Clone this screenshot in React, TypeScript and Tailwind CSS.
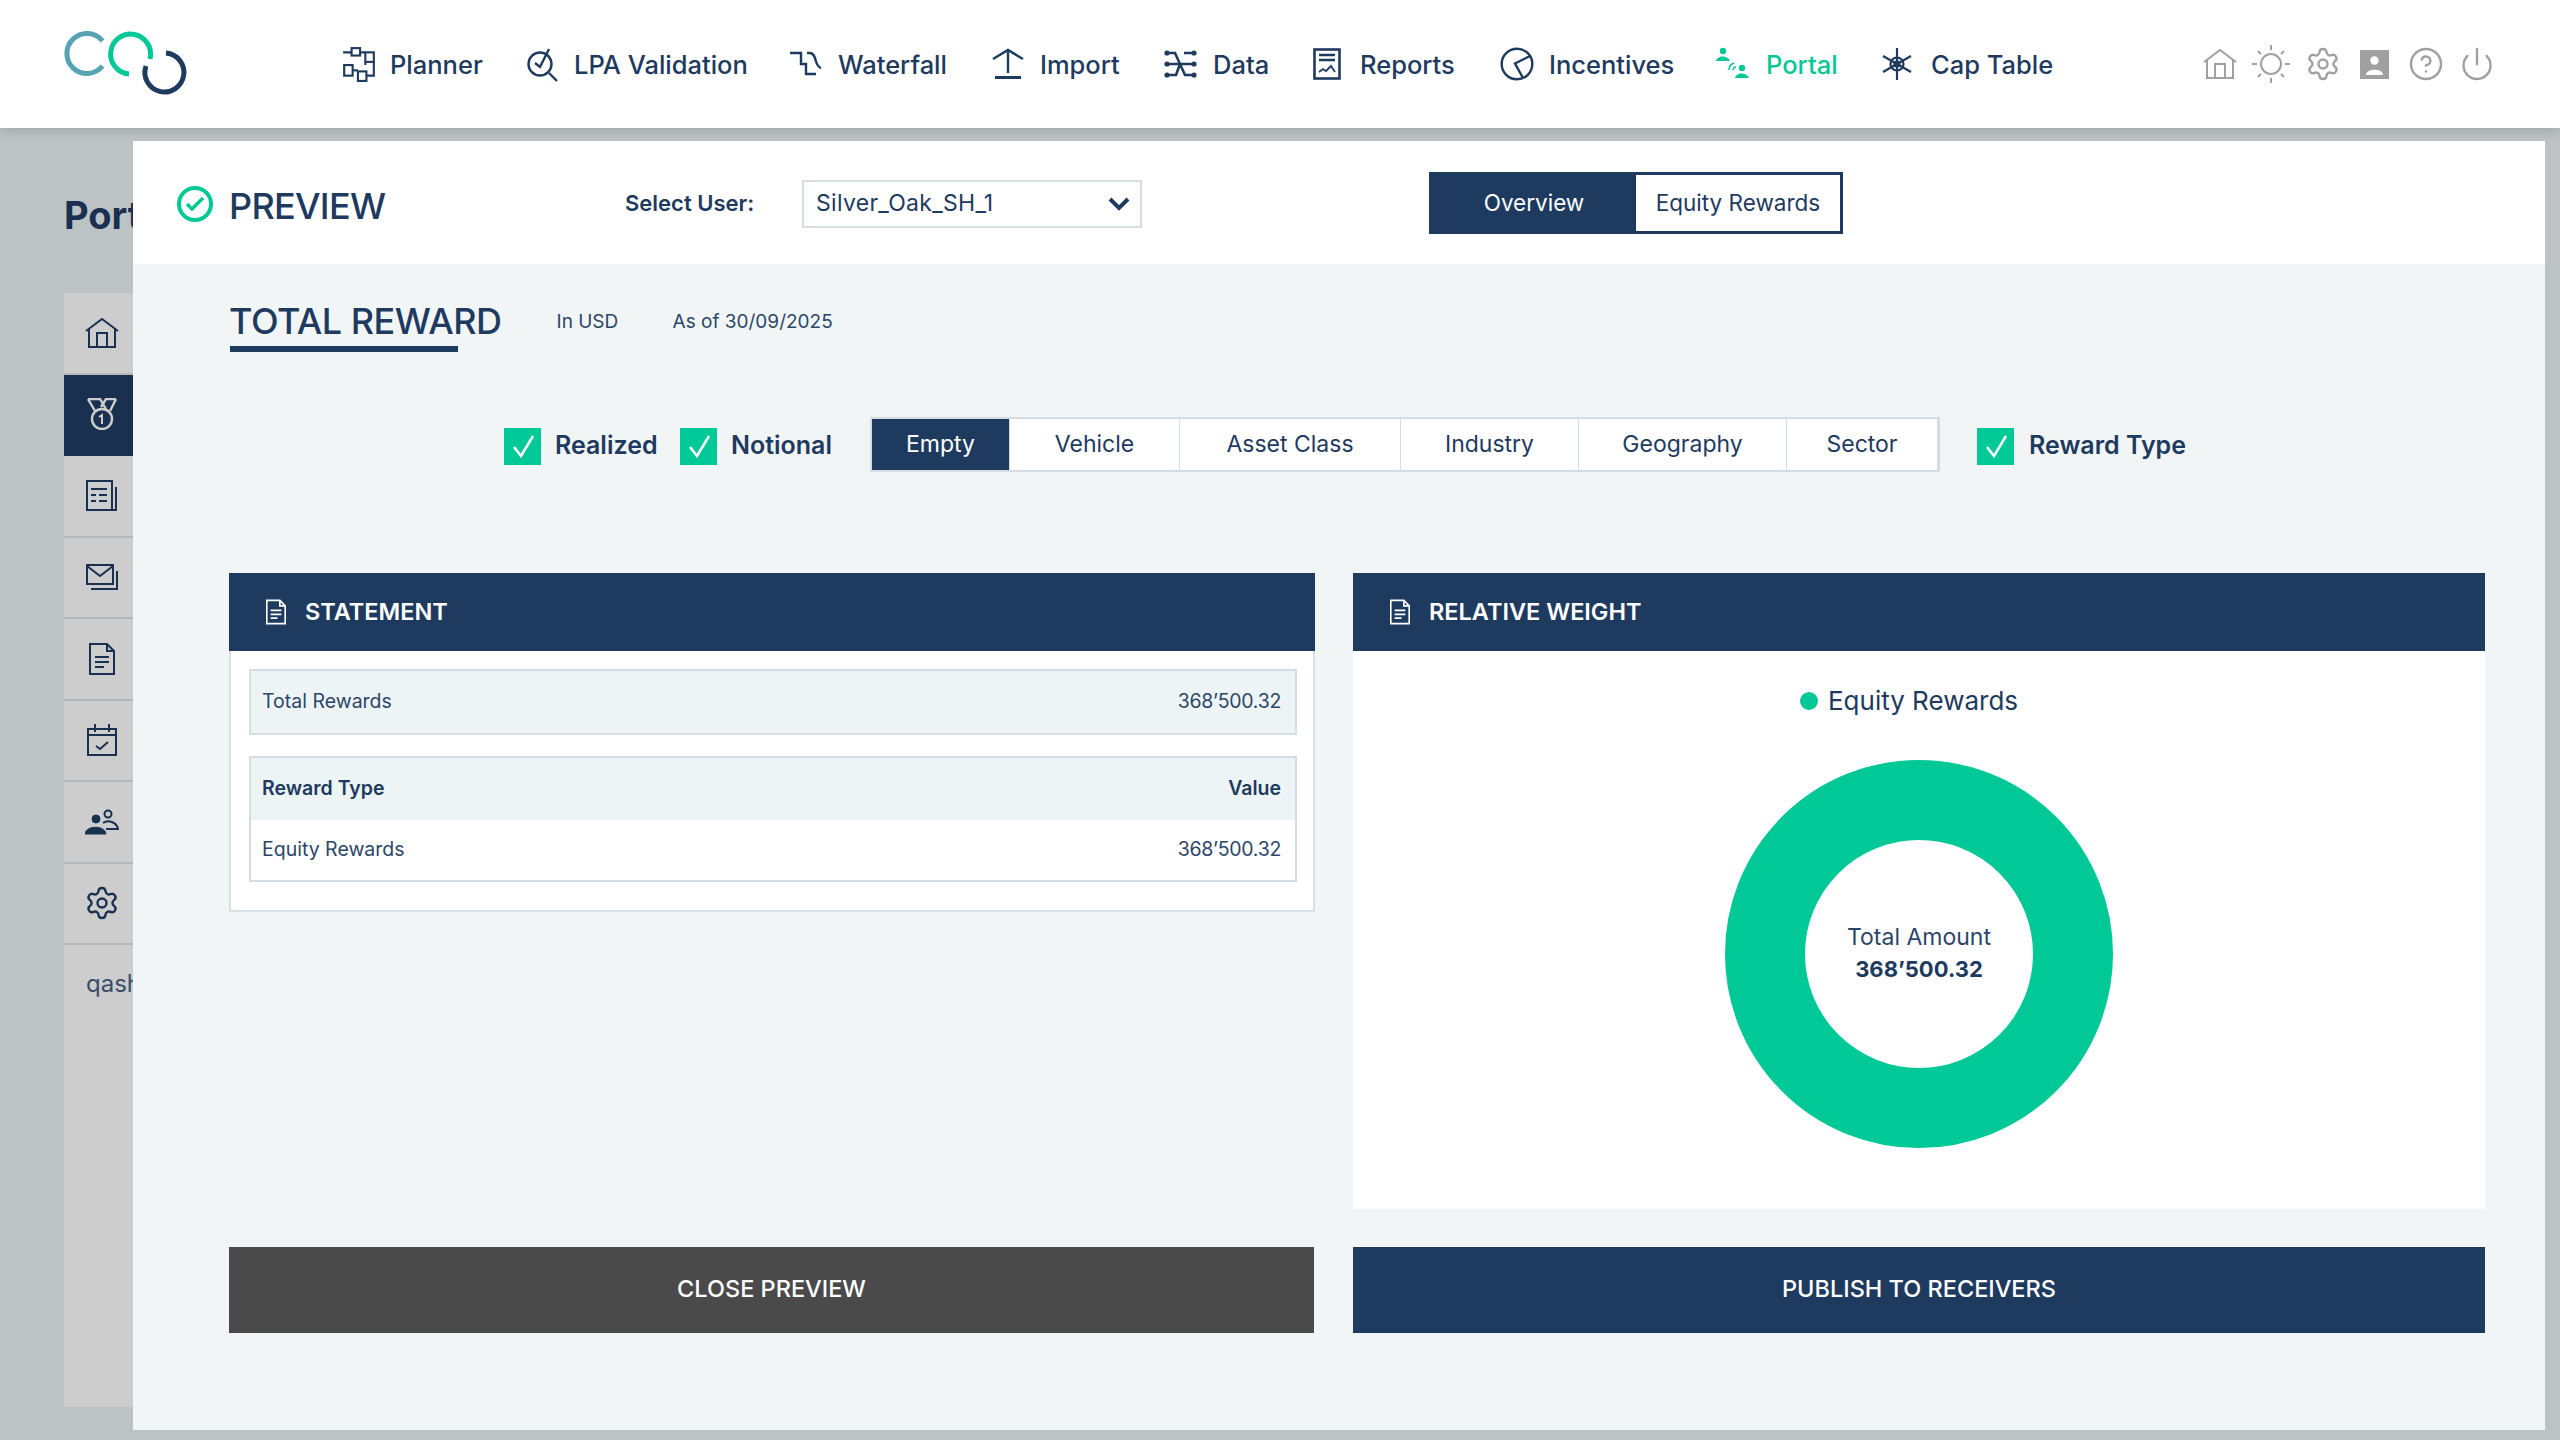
import { CircleHelp, Power, Settings } from "lucide-react";

const Logo = () => (
  <svg width="130" height="70" viewBox="62 30 130 70" fill="none" strokeWidth="5">
    <path d="M102.5 42A20 20 0 1 0 102.5 67" stroke="#55a3b3" />
    <path d="M150 60A20 20 0 1 0 129 75" stroke="#00c896" />
    <path d="M166 54A19.5 19.5 0 1 1 146 67" stroke="#1e3a5f" />
  </svg>
);

const PlannerIcon = () => (
  <svg width="32" height="36" viewBox="0 0 30 34" fill="none" stroke="currentColor" strokeWidth="2">
    <path d="M0 6H8M16 6H21" />
    <rect x="8" y="2" width="8" height="7" />
    <rect x="21" y="6" width="8" height="9" />
    <path d="M29 15V28H22M21 15V18" />
    <rect x="1" y="18" width="8" height="10" />
    <path d="M9 23H14" />
    <rect x="14" y="24" width="8" height="9" />
  </svg>
);

const LpaIcon = () => (
  <svg width="32" height="36" viewBox="0 0 32 36" fill="none" stroke="currentColor" strokeWidth="2.4">
    <circle cx="13" cy="18" r="11.5" />
    <path d="M8 17l5 4 9-18M22 27l8 8" />
  </svg>
);

const WaterfallIcon = () => (
  <svg width="32" height="26" viewBox="0 0 32 26" fill="none" stroke="currentColor" strokeWidth="2.4">
    <path d="M0 2H11V13H16V23H26" />
    <path d="M17 2H20C27 2 24 15 31 17" />
  </svg>
);

const ImportIcon = () => (
  <svg width="32" height="32" viewBox="0 0 32 32" fill="none" stroke="currentColor" strokeWidth="2.4">
    <path d="M1 11L16 2L31 11M16 2V25" />
    <path d="M3 29.5H29" strokeWidth="3" />
  </svg>
);

const DataIcon = () => (
  <svg width="33" height="28" viewBox="0 0 33 28" fill="none" stroke="currentColor" strokeWidth="2.6">
    <path d="M3 3H11L21 25H30M3 14H30M3 25H12L16 14M20 3H30" />
    <g fill="currentColor" stroke="none">
      <circle cx="3" cy="3" r="2.6" />
      <circle cx="3" cy="14" r="2.6" />
      <circle cx="3" cy="25" r="2.6" />
      <circle cx="30" cy="3" r="2.6" />
      <circle cx="30" cy="14" r="2.6" />
      <circle cx="30" cy="25" r="2.6" />
    </g>
  </svg>
);

const ReportsIcon = () => (
  <svg width="28" height="32" viewBox="0 0 28 32" fill="none" stroke="currentColor" strokeWidth="2.6">
    <rect x="1.5" y="1.5" width="25" height="29" />
    <path d="M6 7H22M6 12H22" />
    <path d="M6 24l4-3 3 2 5-5 4 6" strokeWidth="1.8" />
  </svg>
);

const IncentivesIcon = () => (
  <svg width="34" height="34" viewBox="0 0 34 34" fill="none" stroke="currentColor" strokeWidth="2.4">
    <circle cx="17" cy="17" r="15.3" />
    <path d="M30 9L15 16.5L23 31" />
  </svg>
);

const PortalIcon = () => (
  <svg width="34" height="34" viewBox="0 0 34 34" fill="currentColor">
    <circle cx="7" cy="4" r="3.2" />
    <path d="M0 14C1 8 12 8 14 14Z" />
    <circle cx="26" cy="21" r="3.2" />
    <path d="M19 31C20 25 31 25 33 31Z" />
    <path d="M13 23C13 20 15 17 18 16M17 23C17 22 18 20 20 20" fill="none" stroke="currentColor" strokeWidth="1.6" />
  </svg>
);

const CapTableIcon = () => (
  <svg width="30" height="32" viewBox="0 0 30 32" fill="none" stroke="currentColor" strokeWidth="2.2">
    <path d="M15 0V32M1 8L29 24M29 8L1 24" />
    <circle cx="15" cy="16" r="6.5" />
    <circle cx="15" cy="16" r="2.5" fill="currentColor" />
  </svg>
);

const HomeIcon = ({ width = 34 }: { width?: number }) => (
  <svg width={width} height={width - 4} viewBox="0 0 34 30" fill="none" stroke="currentColor" strokeWidth="2">
    <path d="M1 13L17 1L33 13" />
    <path d="M4 11V29H30V11" />
    <path d="M12 29V15H22V29" />
  </svg>
);

const SunIcon = () => (
  <svg width="38" height="38" viewBox="0 0 38 38" fill="none" stroke="currentColor" strokeWidth="2">
    <circle cx="19" cy="19" r="10" />
    <path d="M19 0V5M19 33V38M0 19H5M33 19H38M6 6L9 9M29 29L32 32M32 6L29 9M9 29L6 32" />
  </svg>
);

const UserSquareIcon = () => (
  <svg width="29" height="29" viewBox="0 0 29 29">
    <rect width="29" height="29" fill="#a0a0a0" />
    <circle cx="14.5" cy="10.5" r="4.2" fill="#fff" />
    <path d="M6 25C6 18 23 18 23 25Z" fill="#fff" />
  </svg>
);

const MedalIcon = () => (
  <svg width="30" height="32" viewBox="0 0 30 32" fill="none" stroke="currentColor" strokeWidth="2.4">
    <path d="M1 1H13L19 11M29 1H19L14 9M1 1L8 13M29 1L23 13" />
    <circle cx="15" cy="21" r="10" />
    <path d="M12 19l3-2V26" strokeWidth="2" />
  </svg>
);

const NewsIcon = () => (
  <svg width="32" height="32" viewBox="0 0 32 32" fill="none" stroke="currentColor" strokeWidth="2">
    <rect x="1" y="1" width="25" height="29" />
    <path d="M5 9H21M5 15H10M13 15H21M5 21H10M13 21H21" />
    <path d="M30 7V30H26" />
  </svg>
);

const MailsIcon = () => (
  <svg width="32" height="26" viewBox="0 0 32 26" fill="none" stroke="currentColor" strokeWidth="2">
    <rect x="1" y="1" width="26" height="19" />
    <path d="M1 2L14 12L27 2" />
    <path d="M31 7V25H5" />
  </svg>
);

const DocIcon = ({ strokeWidth = 2 }: { strokeWidth?: number }) => (
  <svg width="100%" height="100%" viewBox="0 0 26 32" fill="none" stroke="currentColor" strokeWidth={strokeWidth}>
    <path d="M1 1H18L25 8V31H1Z" />
    <path d="M18 1V8H25M6 14H20M6 19H20M6 24H15" />
  </svg>
);

const CalendarIcon = () => (
  <svg width="30" height="32" viewBox="0 0 30 32" fill="none" stroke="currentColor" strokeWidth="2">
    <rect x="1" y="5" width="28" height="26" />
    <path d="M8 0V8M22 0V8M1 11H29" />
    <path d="M9 22l4 3 8-7" />
  </svg>
);

const UsersIcon = () => (
  <svg width="34" height="26" viewBox="0 0 34 26" fill="none" stroke="currentColor">
    <circle cx="11" cy="10" r="4" fill="currentColor" />
    <path d="M0 25C1 16 20 16 21 25Z" fill="currentColor" />
    <circle cx="23" cy="5" r="3.5" strokeWidth="2" />
    <path d="M18 14C24 10 32 14 33 20H21" strokeWidth="2" />
  </svg>
);

const CheckIcon = () => (
  <svg width="37" height="37" viewBox="0 0 37 37" fill="none" className="bg-[#00c896] mt-[3px]">
    <path d="M10 19l7 9L29 8" stroke="#fff" strokeWidth="2.5" />
  </svg>
);

const navItems = [
  { label: "Planner", icon: <PlannerIcon />, width: "w-[184px]", iconBox: "w-[47px]" },
  { label: "LPA Validation", icon: <LpaIcon />, width: "w-[263px]", iconBox: "w-[47px]" },
  { label: "Waterfall", icon: <WaterfallIcon />, width: "w-[202px]", iconBox: "w-[48px]" },
  { label: "Import", icon: <ImportIcon />, width: "w-[172px]", iconBox: "w-[48px]" },
  { label: "Data", icon: <DataIcon />, width: "w-[149px]", iconBox: "w-[49px]" },
  { label: "Reports", icon: <ReportsIcon />, width: "w-[187px]", iconBox: "w-[47px]" },
  { label: "Incentives", icon: <IncentivesIcon />, width: "w-[216px]", iconBox: "w-[49px]" },
  { label: "Portal", icon: <PortalIcon />, width: "w-[166px]", iconBox: "w-[50px]", active: true },
  { label: "Cap Table", icon: <CapTableIcon />, width: "w-[168px]", iconBox: "w-[49px]" },
];

const toolIcons = [
  <HomeIcon key="home" />,
  <SunIcon key="sun" />,
  <Settings key="settings" size={36} strokeWidth={1.6} />,
  <UserSquareIcon key="user" />,
  <CircleHelp key="help" size={36} strokeWidth={1.6} />,
  <Power key="power" size={36} strokeWidth={1.6} />,
];

const sideItems = [
  { icon: <HomeIcon /> },
  { icon: <MedalIcon />, active: true },
  { icon: <NewsIcon /> },
  { icon: <MailsIcon /> },
  { icon: <div className="w-[26px] h-[32px]"><DocIcon /></div> },
  { icon: <CalendarIcon /> },
  { icon: <UsersIcon /> },
  { icon: <Settings size={36} strokeWidth={1.6} /> },
];

const filterTabs = [
  { label: "Empty", width: "w-[138px]", active: true },
  { label: "Vehicle", width: "w-[170px]" },
  { label: "Asset Class", width: "w-[221px]" },
  { label: "Industry", width: "w-[178px]" },
  { label: "Geography", width: "w-[208px]" },
  { label: "Sector", width: "w-[151px]" },
];

const PanelHeader = ({ title }: { title: string }) => (
  <div className="h-[78px] bg-[#1e3a5f] flex items-center pl-[37px] pb-[1px] gap-[19px] text-white">
    <div className="w-[20px] h-[26px]">
      <DocIcon strokeWidth={2.2} />
    </div>
    <span className="text-[23.5px] font-semibold">{title}</span>
  </div>
);

const App = () => {
  return (
    <div className="relative w-[2560px] h-[1440px] overflow-hidden bg-[#bdc2c5] font-['Inter',sans-serif] text-[#1e3a5f]">
      {/* Top bar */}
      <header className="relative h-[128px] bg-white flex items-center shadow-[0_4px_10px_rgba(0,0,0,0.12)]">
        <div className="ml-[62px] w-[281px] shrink-0">
          <Logo />
        </div>
        <nav className="flex items-center">
          {navItems.map((item) => (
            <div
              key={item.label}
              className={`flex items-center shrink-0 ${item.width} ${item.active ? "text-[#00c896]" : "text-[#1e3a5f]"}`}
            >
              <div className={`flex items-center shrink-0 ${item.iconBox}`}>{item.icon}</div>
              <span className="mt-[2px] text-[25.5px] font-medium whitespace-nowrap">{item.label}</span>
            </div>
          ))}
        </nav>
        <div className="flex items-center text-[#a0a0a0] ml-[144px]">
          {toolIcons.map((icon) => (
            <div key={icon.key} className="w-[51.5px] flex justify-center">
              {icon}
            </div>
          ))}
        </div>
      </header>

      {/* Page behind the preview */}
      <div className="pl-[64px]">
        <div className="h-[165px] pt-[10px] flex items-center text-[38px] font-bold text-[#1a3050]">Portal</div>
        <aside className="w-[200px] h-[1114px] bg-[#cdcdcd] text-[#1a3050]">
          {sideItems.map((item, i) => (
            <div
              key={i}
              className={`h-[81.5px] pl-[20px] flex items-center border-b-2 ${
                item.active ? "bg-[#1a3050] text-[#cdcdcd] border-[#1a3050]" : "border-[#b3b7ba]"
              }`}
            >
              <div className="w-[36px] flex justify-center">{item.icon}</div>
            </div>
          ))}
          <div className="pl-[22px] pt-[21px] text-[24px] text-[#3a4d68]">qashare</div>
        </aside>
      </div>

      {/* Preview dialog */}
      <div className="absolute left-[133px] top-[141px] w-[2412px] h-[1289px] bg-[#f1f5f6]">
        <div className="h-[123px] bg-white flex items-center">
          <div className="ml-[44px] mt-[3px] w-[36px] h-[36px] rounded-full border-[4px] border-[#00c896] flex items-center justify-center">
            <svg width="20" height="16" viewBox="0 0 20 16" fill="none" stroke="#00c896" strokeWidth="3.5">
              <path d="M2 8l5 5L18 2" />
            </svg>
          </div>
          <span className="ml-[16px] mt-[6px] w-[396px] text-[36px] font-medium tracking-[-0.7px]">PREVIEW</span>
          <span className="w-[177px] mt-[2px] text-[22px] font-semibold">Select User:</span>
          <div className="w-[340px] h-[48px] mt-[2px] bg-white border-2 border-[#d4dde5] flex items-center justify-between pl-[12px] pr-[10px] text-[23px] tracking-[0.3px]">
            <span>Silver_Oak_SH_1</span>
            <svg width="22" height="14" viewBox="0 0 22 14" fill="none" stroke="#1e3a5f" strokeWidth="4">
              <path d="M2 2l9 9 9-9" />
            </svg>
          </div>
          <div className="ml-[287px] w-[414px] h-[62px] flex border-[3px] border-[#1e3a5f] text-[22.5px]">
            <div className="w-[204px] bg-[#1e3a5f] text-white flex items-center justify-center">Overview</div>
            <div className="flex-1 bg-white flex items-center justify-center">Equity Rewards</div>
          </div>
        </div>

        <div className="pl-[96px] pr-[60px]">
          {/* Title row */}
          <div className="h-[88px] flex items-end">
            <div>
              <span className="block text-[36px] leading-[50px] font-medium tracking-[-0.5px] whitespace-nowrap">TOTAL REWARD</span>
              <div className="h-[6px] w-[228px] bg-[#1e3a5f] ml-[1px]" />
            </div>
            <div className="ml-[55px] mb-[16px] flex text-[19px] text-[#2c4668]">
              <span className="w-[116px]">In USD</span>
              <span>As of 30/09/2025</span>
            </div>
          </div>

          {/* Filters */}
          <div className="mt-[65px] flex items-center pl-[275px]">
            <CheckIcon />
            <span className="ml-[14px] mt-[2px] w-[125px] text-[25px] font-semibold">Realized</span>
            <CheckIcon />
            <span className="ml-[14px] mt-[2px] w-[139px] text-[25px] font-semibold">Notional</span>
            <div className="flex border-2 border-[#d4dde5] h-[55px] bg-white">
              {filterTabs.map((tab) => (
                <div
                  key={tab.label}
                  className={`${tab.width} flex items-center justify-center text-[23px] border-r border-[#d4dde5] ${
                    tab.active ? "bg-[#1e3a5f] text-white" : ""
                  }`}
                >
                  {tab.label}
                </div>
              ))}
            </div>
            <div className="ml-[37px]">
              <CheckIcon />
            </div>
            <span className="ml-[15px] mt-[2px] text-[25px] font-semibold">Reward Type</span>
          </div>

          {/* Panels */}
          <div className="mt-[101px] grid grid-cols-[1086px_1132px] gap-x-[38px] items-start">
            <section>
              <PanelHeader title="STATEMENT" />
              <div className="h-[261px] bg-white border-2 border-t-0 border-[#d8e0e7] pl-[18px] pr-[16px] pt-[18px] text-[19.5px] text-[#2c4668]">
                <div className="h-[66px] bg-[#edf4f6] border-2 border-[#d4dde5] flex items-center justify-between pl-[11px] pr-[14px]">
                  <span>Total Rewards</span>
                  <span className="tracking-[-0.3px]">368’500.32</span>
                </div>
                <div className="mt-[21px] border-2 border-[#d4dde5]">
                  <div className="h-[62px] bg-[#edf4f6] flex items-center justify-between pl-[11px] pr-[14px] font-semibold text-[#1e3a5f]">
                    <span>Reward Type</span>
                    <span>Value</span>
                  </div>
                  <div className="h-[60px] flex items-center justify-between pl-[11px] pr-[14px]">
                    <span>Equity Rewards</span>
                    <span className="tracking-[-0.3px]">368’500.32</span>
                  </div>
                </div>
              </div>
            </section>

            <section>
              <PanelHeader title="RELATIVE WEIGHT" />
              <div className="h-[558px] bg-white flex flex-col items-center">
                <div className="mt-[30px] ml-[-20px] flex items-center gap-[10px] text-[26px]">
                  <div className="w-[18px] h-[18px] rounded-full bg-[#00c896]" />
                  Equity Rewards
                </div>
                <div className="mt-[40px] w-[388px] h-[388px] rounded-full border-[80px] border-[#00c896] flex flex-col items-center justify-center pb-[2px]">
                  <span className="text-[23px] leading-[32px] text-[#2c4668] whitespace-nowrap">Total Amount</span>
                  <span className="text-[22px] leading-[32px] font-bold whitespace-nowrap">368’500.32</span>
                </div>
              </div>
            </section>
          </div>

          {/* Actions */}
          <div className="mt-[38px] grid grid-cols-[1085px_1132px] gap-x-[39px]">
            <button className="h-[86px] pb-[2px] bg-[#4a4a4a] text-white text-[23.5px] font-medium">CLOSE PREVIEW</button>
            <button className="h-[86px] pb-[2px] bg-[#1e3a5f] text-white text-[23.5px] font-medium">PUBLISH TO RECEIVERS</button>
          </div>
        </div>
      </div>
    </div>
  );
};

export default App;
